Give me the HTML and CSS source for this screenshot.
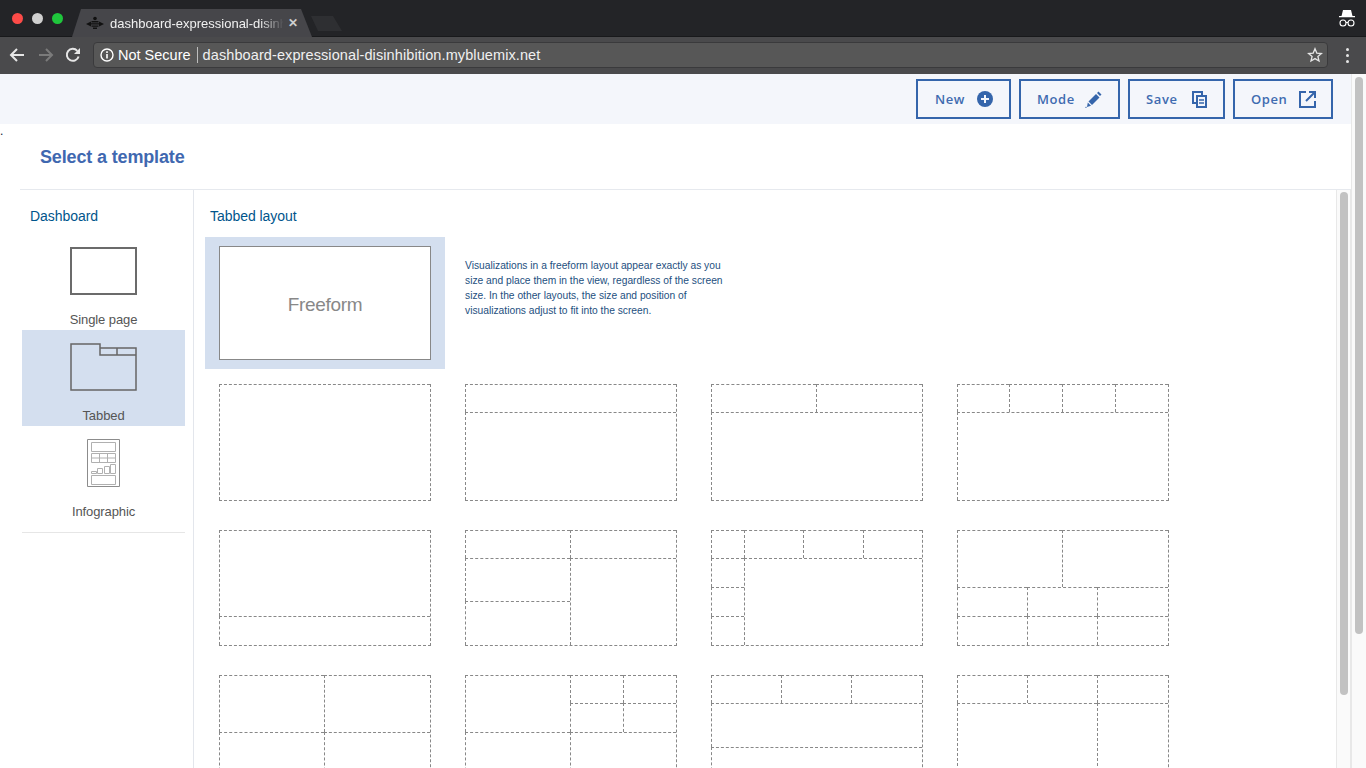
FILE: index.html
```html
<!DOCTYPE html>
<html lang="en">
<head>
    <meta charset="UTF-8">
    <title>Dashboard</title>
    <link rel="stylesheet" href="styles.css">
</head>
<body>
    <!-- browser chrome -->
    <div class="tabstrip">
        <div class="lights">
            <span class="light red"></span>
            <span class="light grey"></span>
            <span class="light green"></span>
        </div>
        <div class="tab">
            <svg class="favicon" width="18" height="14" viewBox="0 0 18 14">
                <path d="M0 8l5-2.500v5z" fill="#111"/>
                <path d="M18 8l-5-2.500v5z" fill="#111"/>
                <circle cx="9" cy="2.500" r="1.800" fill="#111"/>
                <path d="M5.500 5h7v1.400h-7zM5 7.200h8v1.400H5zM5.500 9.400h7v1.400h-7zM7 11.600h4V13H7z" fill="#111"/>
            </svg>
            <span class="tab-title">dashboard-expressional-disinh</span>
            <span class="tab-close">&#10005;</span>
        </div>
        <div class="newtab"></div>
        <svg class="incognito" width="18" height="18" viewBox="0 0 18 18">
            <path d="M5 1h8l1.500 6h-11zM1 7h16v1.200H1z" fill="#fff"/>
            <circle cx="5" cy="14" r="3" fill="none" stroke="#fff" stroke-width="1.100"/>
            <circle cx="13" cy="14" r="3" fill="none" stroke="#fff" stroke-width="1.100"/>
            <path d="M8 13.500h2" stroke="#fff" stroke-width="1.100"/>
        </svg>
    </div>
    <div class="toolbar">
        <svg class="nav-icon" width="16" height="16" viewBox="0 0 16 16"><path d="M15 8H2M8 2L2 8l6 6" fill="none" stroke="#e6e6e6" stroke-width="2"/></svg>
        <svg class="nav-icon nav-forward" width="16" height="16" viewBox="0 0 16 16"><path d="M1 8h13M8 2l6 6-6 6" fill="none" stroke="#7b7b7b" stroke-width="2"/></svg>
        <svg class="nav-icon" width="16" height="16" viewBox="0 0 16 16"><path d="M13.600 9.500A6 6 0 1 1 12.300 3.800" fill="none" stroke="#e6e6e6" stroke-width="2"/><path d="M15 1v6H9z" fill="#e6e6e6"/></svg>
        <div class="omnibox">
            <svg class="info" width="14" height="14" viewBox="0 0 14 14"><circle cx="7" cy="7" r="6" fill="none" stroke="#fff" stroke-width="1.400"/><path d="M6.200 6h1.600v4.500H6.200zM6.200 3.300h1.600v1.600H6.200z" fill="#fff"/></svg>
            <span class="not-secure">Not Secure</span>
            <span class="divider"></span>
            <span class="url">dashboard-expressional-disinhibition.mybluemix.net</span>
            <svg class="star" width="16" height="16" viewBox="0 0 16 16"><path d="M8 1.800l1.800 4.300 4.600.4-3.500 3 1.100 4.500L8 11.600 4 14l1.100-4.500-3.500-3 4.600-.4z" fill="none" stroke="#e6e6e6" stroke-width="1.300"/></svg>
        </div>
        <div class="kebab"><i></i><i></i><i></i></div>
    </div>

    <!-- the page itself -->
    <div class="page">
        <div class="main">
            <div class="actions">
                <button class="btn">New
                    <svg width="16" height="16" viewBox="0 0 16 16"><circle cx="8" cy="8" r="8" fill="#3565ab"/><path d="M8 4v8M4 8h8" stroke="#f4f6fb" stroke-width="2"/></svg>
                </button>
                <button class="btn">Mode
                    <svg width="17" height="17" viewBox="0 0 17 17"><path d="M3.500 10.500L11 3l3.500 3.500L7 14z" fill="#3565ab"/><path d="M12 2l1.500-1.500 3 3L15 5zM2.800 11.500l3.200 3.200-4 1.200zM0 17l1-1.500 1 1z" fill="#3565ab"/></svg>
                </button>
                <button class="btn">Save
                    <svg width="15" height="17" viewBox="0 0 15 17"><path d="M10 4V1H1v11h3" fill="none" stroke="#3565ab" stroke-width="2"/><path d="M5 5h9v11H5z" fill="none" stroke="#3565ab" stroke-width="2"/><path d="M7 9h5M7 12h5" stroke="#3565ab" stroke-width="1.500"/></svg>
                </button>
                <button class="btn">Open
                    <svg width="17" height="17" viewBox="0 0 17 17"><path d="M7 1H1v15h15v-6" fill="none" stroke="#3565ab" stroke-width="2"/><path d="M10 1h6v6M16 1L7 10" fill="none" stroke="#3565ab" stroke-width="2"/></svg>
                </button>
            </div>
            <span class="stray">.</span>
            <div class="title-row">
                <h1>Select a template</h1>
            </div>
            <div class="picker">
                <div class="sidebar">
                    <div class="side-title">Dashboard</div>
                    <div class="side-item">
                        <div class="ic-single"></div>
                        <div class="side-label">Single page</div>
                    </div>
                    <div class="side-item selected">
                        <svg class="side-icon" width="67" height="48" viewBox="0 0 67 48">
                            <path d="M1 1h29v4h36v42H1zM30 5v7h36M47 5v7" fill="none" stroke="#666" stroke-width="1.500"/>
                        </svg>
                        <div class="side-label">Tabbed</div>
                    </div>
                    <div class="side-item">
                        <svg class="side-icon" width="33" height="48" viewBox="0 0 33 48">
                            <path d="M.5.500h32v47H.5z" fill="none" stroke="#8c8c8c"/>
                            <g fill="none" stroke="#b0b0b0" stroke-width="1">
                                <path d="M4.500 3.500h24v9h-24z"/>
                                <path d="M4.500 14.500h24v9h-24zM4.500 19h24M12.500 14.500v9M20.500 14.500v9"/>
                                <path d="M4.500 34.500v-2h5v2zM10.500 34.500v-5h5v5zM17.500 34.500v-7h5v7zM23.500 34.500v-9h5v9z"/>
                                <path d="M4.500 36.500h24v9h-24z"/>
                            </g>
                        </svg>
                        <div class="side-label">Infographic</div>
                    </div>
                    <div class="side-rule"></div>
                </div>
                <div class="content">
                    <div class="content-title">Tabbed layout</div>
                    <div class="free-row">
                        <div class="free-box"><div class="free-inner">Freeform</div></div>
                        <p class="free-desc">Visualizations in a freeform layout appear exactly as you size and place them in the view, regardless of the screen size. In the other layouts, the size and position of visualizations adjust to fit into the screen.</p>
                    </div>
                    <div class="thumbs">
                        <div class="thumb l1"><i class="a"></i></div>
                        <div class="thumb l2"><i class="a"></i><i class="b"></i></div>
                        <div class="thumb l3"><i class="a"></i><i class="b"></i><i class="c"></i></div>
                        <div class="thumb l4"><i class="a"></i><i class="b"></i><i class="c"></i><i class="d"></i><i class="e"></i></div>

                        <div class="thumb l5"><i class="a"></i><i class="b"></i></div>
                        <div class="thumb l6"><i class="a"></i><i class="b"></i><i class="c"></i><i class="d"></i><i class="e"></i></div>
                        <div class="thumb l7"><i class="a"></i><i class="b"></i><i class="c"></i><i class="d"></i><i class="e"></i><i class="f"></i><i class="g"></i><i class="h"></i></div>
                        <div class="thumb l8"><i class="a"></i><i class="b"></i><i class="c"></i><i class="d"></i><i class="e"></i><i class="f"></i><i class="g"></i><i class="h"></i></div>

                        <div class="thumb l9"><i class="a"></i><i class="b"></i><i class="c"></i><i class="d"></i></div>
                        <div class="thumb l10"><i class="a"></i><i class="b"></i><i class="c"></i><i class="d"></i><i class="e"></i><i class="f"></i><i class="g"></i></div>
                        <div class="thumb l11"><i class="a"></i><i class="b"></i><i class="c"></i><i class="d"></i><i class="e"></i></div>
                        <div class="thumb l12"><i class="a"></i><i class="b"></i><i class="c"></i><i class="d"></i><i class="e"></i></div>
                    </div>
                </div>
                <div class="scroll inner-scroll"><div class="thumbbar"></div></div>
            </div>
        </div>
        <div class="scroll outer-scroll"><div class="thumbbar"></div></div>
    </div>
</body>
</html>
```

FILE: styles.css
```css
* {
    margin: 0;
    padding: 0;
    box-sizing: border-box;
}
html, body {
    height: 768px;
    overflow: hidden;
}
body {
    font-family: "Liberation Sans", Arial, sans-serif;
    background: #fff;
}

/* browser chrome */
.tabstrip {
    display: flex;
    align-items: flex-end;
    height: 37px;
    background: #232427;
    border-bottom: 1px solid #18191b;
}
.lights {
    display: flex;
    gap: 9px;
    align-self: flex-start;
    margin: 13px 0 0 12px;
}
.light {
    width: 11px;
    height: 11px;
    border-radius: 50%;
}
.red { background: #fc4b48; }
.grey { background: #d0d0d0; }
.green { background: #1fc63c; }
.tab {
    display: flex;
    align-items: center;
    width: 240px;
    height: 28px;
    margin-left: 9px;
    margin-bottom: -1px;
    padding: 0 14px;
    background: #46464a;
    clip-path: polygon(0 100%, 9px 0, 229px 0, 100% 100%);
}
.favicon {
    flex: none;
}
.tab-title {
    flex: none;
    width: 173px;
    margin-left: 6px;
    white-space: nowrap;
    font-size: 13px;
    color: #f1f1f1;
    -webkit-mask-image: linear-gradient(to right, #000 150px, transparent 174px);
    mask-image: linear-gradient(to right, #000 150px, transparent 174px);
}
.tab-close {
    margin-left: 5px;
    font-size: 12px;
    font-weight: bold;
    color: #cfcfcf;
}
.newtab {
    width: 31px;
    height: 15px;
    margin: 0 0 5px -1px;
    background: #2e2f32;
    clip-path: polygon(0 0, 22px 0, 100% 100%, 7px 100%);
}
.incognito {
    margin-left: auto;
    margin-right: 10px;
    margin-bottom: 9px;
}
.toolbar {
    display: flex;
    align-items: center;
    gap: 12px;
    height: 37px;
    padding: 0 0 1px 9px;
    background: #4a4a4c;
}
.nav-icon {
    flex: none;
}
.nav-forward {
    margin: 0 -1px 0 1px;
}
.omnibox {
    display: flex;
    align-items: center;
    width: 1235px;
    height: 26px;
    padding-left: 6px;
    background: #575757;
    border: 1px solid #3a3a3c;
    border-radius: 4px;
}
.info {
    flex: none;
}
.not-secure {
    margin-left: 4px;
    font-size: 14.500px;
    color: #fff;
}
.divider {
    width: 1px;
    height: 16px;
    margin: 0 5px 0 6px;
    background: #bdbdbd;
}
.url {
    font-size: 14.500px;
    letter-spacing: 0.1px;
    color: #f0f0f0;
}
.star {
    margin-left: auto;
    margin-right: 4px;
}
.kebab {
    display: flex;
    flex-direction: column;
    gap: 3px;
    margin-left: 6px;
}
.kebab i {
    width: 3px;
    height: 3px;
    background: #e6e6e6;
    border-radius: 50%;
}

/* page */
.page {
    display: flex;
    height: 694px;
}
.main {
    display: flex;
    flex-direction: column;
    width: 1351px;
}
.actions {
    display: flex;
    justify-content: flex-end;
    gap: 8px;
    flex: none;
    height: 50px;
    padding: 5px 18px 0 0;
    background: #f4f6fb;
}
.btn {
    display: flex;
    align-items: center;
    justify-content: space-between;
    height: 40px;
    background: none;
    border: 2px solid #3565ab;
    font-family: "Open Sans", sans-serif;
    font-size: 13px;
    font-weight: 600;
    letter-spacing: 0.6px;
    color: #3f6bb0;
}
.btn:nth-child(1) { width: 95px; padding: 0 16px 0 17px; }
.btn:nth-child(2) { width: 101px; padding: 0 16px; }
.btn:nth-child(3) { width: 97px; padding: 0 16px 0 16px; }
.btn:nth-child(4) { width: 100px; padding: 0 15px 0 16px; }
.stray {
    display: block;
    height: 0;
    font-size: 12px;
    line-height: 14px;
    color: #123;
}
.title-row {
    display: flex;
    align-items: center;
    flex: none;
    height: 66px;
    margin-left: 20px;
    padding: 1px 0 0 20px;
    border-bottom: 1px solid #e6e9ee;
}
h1 {
    font-size: 18px;
    font-weight: bold;
    letter-spacing: -0.15px;
    color: #3f68b0;
}
.picker {
    display: flex;
    flex: 1;
    min-height: 0;
    margin-left: 20px;
    overflow: hidden;
}

/* left column */
.sidebar {
    flex: none;
    width: 174px;
    padding: 16px 8px 0 2px;
    border-right: 1px solid #e3e6ec;
}
.side-title {
    height: 20px;
    margin-bottom: 8px;
    padding-left: 8px;
    font-size: 14px;
    line-height: 20px;
    letter-spacing: -0.05px;
    color: #00558c;
}
.side-item {
    display: flex;
    flex-direction: column;
    align-items: center;
    height: 96px;
    padding-top: 13px;
}
.selected {
    background: #d4dfef;
}
.ic-single {
    width: 67px;
    height: 48px;
    border: 2px solid #6b6b6b;
}
.side-icon {
    display: block;
}
.side-label {
    margin-top: 15px;
    font-size: 13px;
    line-height: 20px;
    letter-spacing: -0.1px;
    color: #555;
}
.side-rule {
    margin-top: 10px;
    border-top: 1px solid #e6e6e6;
}

/* right column */
.content {
    flex: 1;
    min-width: 0;
    padding: 16px 0 0 11px;
}
.content-title {
    height: 20px;
    margin: 0 0 11px 5px;
    font-size: 14px;
    line-height: 20px;
    letter-spacing: -0.05px;
    color: #00558c;
}
.free-row {
    display: flex;
    margin-bottom: 15px;
}
.free-box {
    width: 240px;
    height: 132px;
    padding: 9px 14px;
    background: #d4dfef;
}
.free-inner {
    display: flex;
    align-items: center;
    justify-content: center;
    height: 114px;
    padding-top: 3px;
    background: #fff;
    border: 1px solid #888;
    font-size: 19px;
    letter-spacing: -0.3px;
    color: #888;
}
.free-desc {
    width: 262px;
    margin: 21px 0 0 20px;
    font-size: 10.250px;
    line-height: 15px;
    color: #1d4f80;
}

/* template grid, each thumb is its own little css grid */
.thumbs {
    display: grid;
    grid-template-columns: repeat(4, 212px);
    grid-template-rows: 117px 116px 117px;
    column-gap: 34px;
    row-gap: 29px;
    margin-left: 14px;
}
.thumb {
    display: grid;
    border-right: 1px dashed #888;
    border-bottom: 1px dashed #888;
}
.thumb i {
    border-top: 1px dashed #888;
    border-left: 1px dashed #888;
}
.a { grid-area: a; }
.b { grid-area: b; }
.c { grid-area: c; }
.d { grid-area: d; }
.e { grid-area: e; }
.f { grid-area: f; }
.g { grid-area: g; }
.h { grid-area: h; }

.l1 {
    grid-template-areas: "a";
}
.l2 {
    grid-template-rows: 28px 1fr;
    grid-template-areas: "a" "b";
}
.l3 {
    grid-template-columns: 105px 1fr;
    grid-template-rows: 28px 1fr;
    grid-template-areas: "a b" "c c";
}
.l4 {
    grid-template-columns: 52px 53px 53px 1fr;
    grid-template-rows: 28px 1fr;
    grid-template-areas: "a b c d" "e e e e";
}
.l5 {
    grid-template-rows: 86px 1fr;
    grid-template-areas: "a" "b";
}
.l6 {
    grid-template-columns: 105px 1fr;
    grid-template-rows: 28px 43px 1fr;
    grid-template-areas: "a b" "c d" "e d";
}
.l7 {
    grid-template-columns: 33px 59px 60px 1fr;
    grid-template-rows: 28px 29px 29px 1fr;
    grid-template-areas: "a b c d" "e f f f" "g f f f" "h f f f";
}
.l8 {
    grid-template-columns: 70px 35px 35px 1fr;
    grid-template-rows: 57px 29px 1fr;
    grid-template-areas: "a a b b" "c d d e" "f g g h";
}
.l9 {
    grid-template-columns: 105px 1fr;
    grid-template-rows: 57px 1fr;
    grid-template-areas: "a b" "c d";
}
.l10 {
    grid-template-columns: 105px 53px 1fr;
    grid-template-rows: 28px 29px 1fr;
    grid-template-areas: "a b c" "a d e" "f g g";
}
.l11 {
    grid-template-columns: 70px 70px 1fr;
    grid-template-rows: 28px 44px 1fr;
    grid-template-areas: "a b c" "d d d" "e e e";
}
.l12 {
    grid-template-columns: 70px 70px 1fr;
    grid-template-rows: 28px 1fr;
    grid-template-areas: "a b c" "d d e";
}

/* scrollbars */
.scroll {
    flex: none;
    width: 15px;
    padding: 2px 3px 0 3px;
    background: #fafafa;
    border-left: 1px solid #e8e8e8;
    border-right: 1px solid #e8e8e8;
}
.thumbbar {
    width: 8px;
    background: #c2c2c2;
    border-radius: 4px;
}
.inner-scroll .thumbbar {
    height: 503px;
}
.outer-scroll {
    padding-top: 3px;
    border-right: 0;
}
.outer-scroll .thumbbar {
    height: 557px;
}
```
